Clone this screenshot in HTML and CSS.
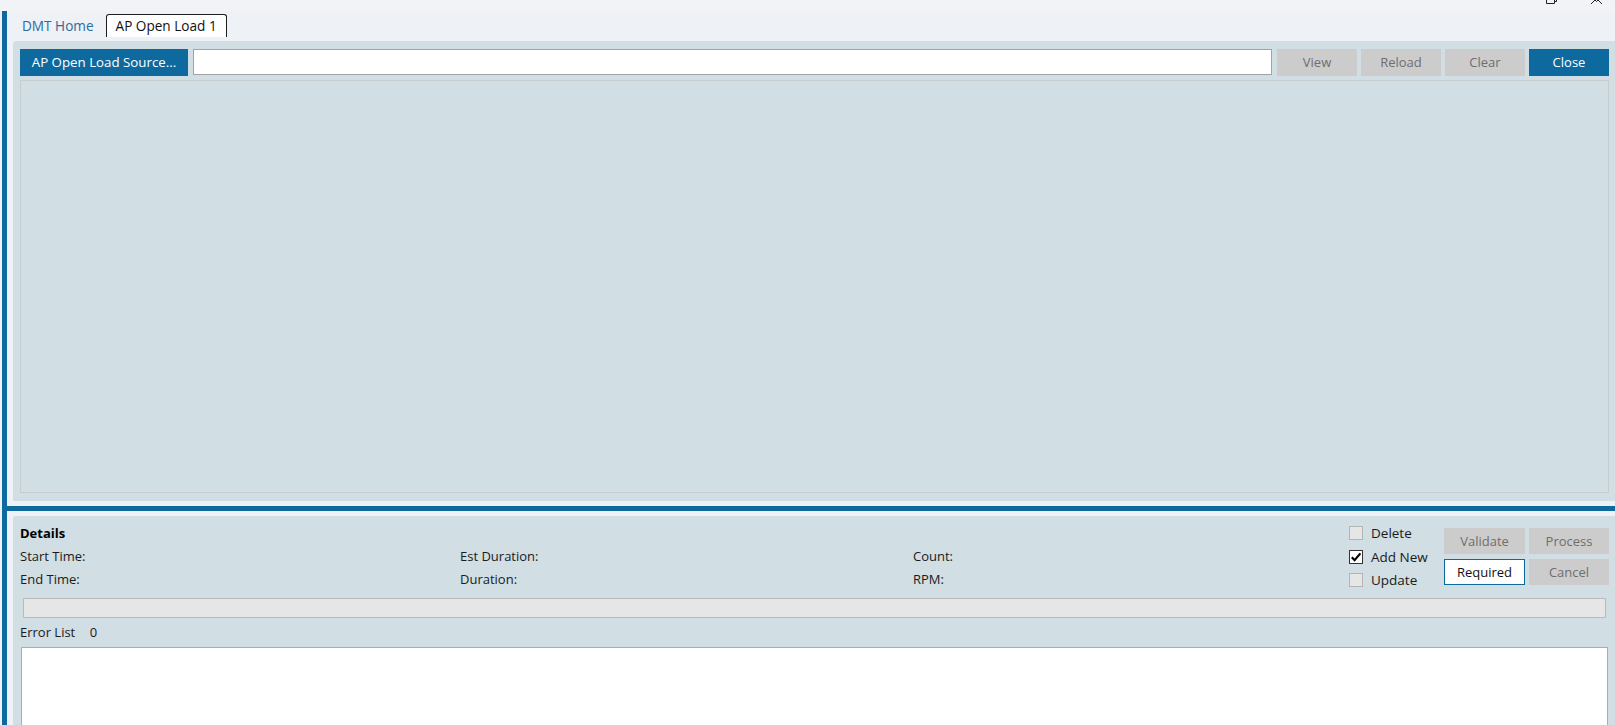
FILE: index.html
```html
<!DOCTYPE html>
<html lang="en">
<head>
<meta charset="utf-8">
<title>AP Open Load</title>
<link rel="stylesheet" href="styles.css">
</head>
<body>
<div class="window">
  <div class="titlebar">
    <svg class="winctl" width="70" height="6" viewBox="0 0 70 6" aria-hidden="true">
      <path d="M1.5 -4 V3.5 H9.5 V-4" fill="none" stroke="#222" stroke-width="1"/>
      <path d="M9.5 1.5 H11.5 V-4" fill="none" stroke="#222" stroke-width="1"/>
      <path d="M47 -3 L51.5 1.5 L56 -3" fill="none" stroke="#222" stroke-width="1"/>
      <path d="M46 4 L51.5 -1.5 L57 4" fill="none" stroke="#222" stroke-width="1"/>
    </svg>
  </div>
  <div class="shell">
    <div class="tabs">
      <div class="tab">DMT Home</div>
      <div class="tab active">AP Open Load 1</div>
    </div>
    <div class="panel top-panel">
      <div class="toolbar">
        <button class="btn primary source">AP Open Load Source...</button>
        <input class="path" type="text" value="">
        <button class="btn disabled">View</button>
        <button class="btn disabled">Reload</button>
        <button class="btn disabled">Clear</button>
        <button class="btn primary">Close</button>
      </div>
      <div class="canvas"></div>
    </div>
    <div class="splitter"></div>
    <div class="panel bottom-panel">
      <div class="details">
        <div class="info">
          <div class="cell bold">Details</div><div class="cell"></div><div class="cell"></div>
          <div class="cell">Start Time:</div><div class="cell">Est Duration:</div><div class="cell">Count:</div>
          <div class="cell">End Time:</div><div class="cell">Duration:</div><div class="cell">RPM:</div>
        </div>
        <div class="checks">
          <div class="check"><span class="box"></span><span>Delete</span></div>
          <div class="check"><span class="box on"><svg width="12" height="12" viewBox="0 0 12 12" aria-hidden="true"><path d="M1.8 6.2 L4.6 9.2 L10.4 2.4" fill="none" stroke="#000" stroke-width="2.2"/></svg></span><span>Add New</span></div>
          <div class="check"><span class="box"></span><span>Update</span></div>
        </div>
        <div class="actions">
          <button class="btn disabled">Validate</button>
          <button class="btn disabled">Process</button>
          <button class="btn outline">Required</button>
          <button class="btn disabled">Cancel</button>
        </div>
      </div>
      <div class="progress"></div>
      <div class="errhead">Error List <span class="count">0</span></div>
      <div class="errlist"></div>
    </div>
  </div>
</div>
</body>
</html>
```

FILE: styles.css
```css
* { box-sizing: border-box; }
html, body { margin: 0; padding: 0; }
body {
  background: #eef1f5;
  font-family: "Open Sans", "Noto Sans", sans-serif;
  font-size: 13px;
  color: #1b1b1b;
}
.window {
  width: 1615px;
  height: 725px;
  overflow: hidden;
  display: flex;
  flex-direction: column;
  position: relative;
}
.titlebar {
  height: 11px;
  flex: none;
  background: #f1f3f7;
}
.winctl {
  position: absolute;
  top: 0;
  left: 1545px;
}
.shell {
  flex: 1;
  margin-left: 2px;
  border-left: 5px solid #0e6a9e;
  display: flex;
  flex-direction: column;
  min-height: 0;
}
.tabs {
  height: 30px;
  flex: none;
  display: flex;
  align-items: flex-start;
  padding: 3px 0 0 5px;
  gap: 2px;
}
.tab {
  height: 23px;
  padding: 0 9px;
  border: 1px solid transparent;
  border-bottom: none;
  line-height: 21px;
  font-size: 13.6px;
  color: #2d6c9c;
  white-space: nowrap;
}
.tab.active {
  background: #fff;
  border-color: #1d1d1d;
  border-radius: 3px 3px 0 0;
  color: #111;
}
.panel {
  margin-left: 6px;
  background: #d1dee3;
  border-radius: 3px 0 0 0;
}
.top-panel {
  height: 460px;
  flex: none;
  padding: 8px 6px 8px 7px;
  display: flex;
  flex-direction: column;
}
.toolbar {
  display: flex;
  align-items: flex-start;
  height: 27px;
  flex: none;
}
.btn {
  font-family: inherit;
  font-size: 13px;
  width: 80px;
  height: 27px;
  border: none;
  padding: 0 0 1px 0;
  margin: 0;
  margin-left: 4px;
  cursor: default;
  white-space: nowrap;
}
.btn.primary { background: #0e6a9e; color: #fff; }
.btn.disabled { background: #cccccc; color: #6e6e6e; }
.btn.source { width: 168px; margin-left: 0; font-size: 13.3px; }
.path {
  flex: 1;
  height: 26px;
  margin: 0 1px 0 5px;
  border: 1px solid #a2a2a2;
  background: #fff;
  font-family: inherit;
  font-size: 13px;
}
.path + .btn { margin-left: 4px; }
.canvas {
  flex: 1;
  margin-top: 4px;
  border: 1px solid #c7cdcf;
  background: #d1dee3;
}
.splitter {
  height: 5px;
  flex: none;
  margin: 5px 0;
  background: #0e6a9e;
}
.bottom-panel {
  flex: 1;
  padding: 5px 6px 0 7px;
  display: flex;
  flex-direction: column;
  min-height: 0;
}
.details {
  display: flex;
  align-items: flex-start;
  flex: none;
}
.info {
  flex: 1;
  display: grid;
  grid-template-columns: 440px 453px 1fr;
  grid-template-rows: 24px 23px 23px;
}
.cell { height: 24px; line-height: 24px; }
.info .cell:nth-child(n+4) { height: 23px; line-height: 23px; }
.cell.bold { font-weight: 700; color: #000; }
.checks {
  width: 95px;
  display: grid;
  grid-template-rows: 24px 23px 23px;
}
.check {
  display: flex;
  align-items: center;
  gap: 8px;
  white-space: nowrap;
  font-size: 13.5px;
}
.box {
  width: 14px;
  height: 14px;
  border: 1px solid #b4b4b4;
  background: #e6e6e6;
  display: flex;
  align-items: center;
  justify-content: center;
  flex: none;
}
.box.on {
  background: #fff;
  border-color: #333;
}
.actions {
  margin-top: 7px;
  display: grid;
  grid-template-columns: 81px 80px;
  grid-auto-rows: 26px;
  gap: 5px 4px;
}
.actions .btn { margin: 0; width: auto; height: 26px; }
.btn.outline {
  background: #fff;
  border: 1px solid #0e6a9e;
  color: #111;
}
.progress {
  flex: none;
  height: 20px;
  margin: 7px 3px 0 3px;
  background: #e6e6e6;
  border: 1px solid #bababa;
}
.errhead {
  flex: none;
  margin-top: 5px;
  line-height: 18px;
  height: 18px;
}
.errhead .count { margin-left: 11px; }
.errlist {
  flex: none;
  height: 120px;
  margin: 6px 1px 0 1px;
  background: #fff;
  border: 1px solid #adadad;
}
```
